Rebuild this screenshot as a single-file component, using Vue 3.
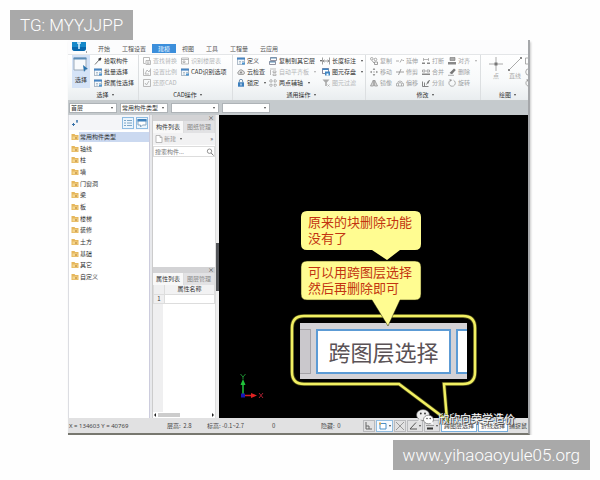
<script setup>
const tabs = ['开始', '工程设置', '建模', '视图', '工具', '工程量', '云应用']

const groups = [
  {
    name: '选择', key: 'select', cols: [
      [['pick', '拾取构件'], ['table', '批量选择'], ['table', '按属性选择']],
    ],
  },
  {
    name: 'CAD操作', key: 'cad', cols: [
      [['doc', '查找替换', 1], ['scale', '设置比例', 1], ['check', '还原CAD', 1]],
      [['form', '识别楼层表', 1], ['table', 'CAD识别选项']],
    ],
  },
  {
    name: '通用操作', key: 'common', cols: [
      [['table', '定义'], ['cloud', '云检查'], ['lock', '锁定', 0, 1]],
      [['copy', '复制到其它层', 0, 1], ['align', '自动平齐板', 1, 1], ['axis', '两点辅轴', 0, 1]],
      [['measure', '长度标注', 0, 1], ['save', '图元存盘', 0, 1], ['filter', '图元过滤', 1]],
    ],
  },
  {
    name: '修改', key: 'modify', cols: [
      [['dup', '复制', 2], ['move', '移动', 2], ['mirror', '镜像', 2]],
      [['extend', '延伸', 2], ['trim', '修剪', 2], ['offset', '偏移', 2]],
      [['break', '打断', 2], ['merge', '合并', 2], ['split', '分割', 2]],
      [['stack', '对齐', 2, 1], ['erase', '删除', 2], ['rotate', '旋转', 2]],
    ],
  },
]

const combos = [
  { label: '楼层', value: '首层' },
  { label: '构件分类', value: '常用构件类型' },
  { label: '构件类型', value: '' },
  { label: '构件名称', value: '' },
]

const tree = ['常用构件类型', '轴线', '柱', '墙', '门窗洞', '梁', '板', '楼梯', '装修', '土方', '基础', '其它', '自定义']
</script>

<template>
  <svg class="defs" aria-hidden="true">
    <symbol id="pick" viewBox="0 0 8 8"><path d="M1 7.5 L5 3" stroke="#777" fill="none" /><path d="M4 2 L6 4 L7.5 1.5 L6.5 .6z" fill="#333" /></symbol>
    <symbol id="table" viewBox="0 0 8 8"><rect x=".5" y="1" width="7" height="6.5" fill="#f4f8fb" stroke="#90a2b2" stroke-width=".7" /><path d="M0 .6h8v2H0z" fill="#4684c2" /><path d="M2 4.5h2M2 6h2M5 4.5h2" stroke="#859bac" stroke-width=".6" /><path d="M5 5.5h3v2H5z" fill="#4d95d0" /></symbol>
    <symbol id="doc" viewBox="0 0 8 8"><path d="M.5 .5h6v3M.5 .5v6h2M3 3.5h4.5v4H3zM4 5h2.5M4 6.3h2.5" stroke="#aaa" stroke-width=".8" fill="none" /></symbol>
    <symbol id="scale" viewBox="0 0 8 8"><path d="M.5 .5v7h7v-7M2 6l2-4 2 2 1-2M2 6h4" stroke="#aaa" stroke-width=".8" fill="none" /></symbol>
    <symbol id="check" viewBox="0 0 8 8"><path d="M.5 .5h7v7h-7zM2 4l1.5 2L6 2" stroke="#aaa" stroke-width=".8" fill="none" /></symbol>
    <symbol id="form" viewBox="0 0 8 8"><path d="M.5 1h7v6h-7zM.5 2.5h7M2 4h2v1.5H2z" stroke="#aaa" stroke-width=".8" fill="none" /></symbol>
    <symbol id="cloud" viewBox="0 0 8 8"><path d="M1.8 6.4a1.6 1.6 0 0 1 0-3 2.3 2.3 0 0 1 4.3-.3 1.7 1.7 0 0 1 .2 3.3z" fill="#ddd" stroke="#888" stroke-width=".8" /><circle cx="4" cy="4.5" r="1" fill="#888" /></symbol>
    <symbol id="lock" viewBox="0 0 8 8"><path d="M2.3 3.5V2a1.7 1.7 0 0 1 3.4 0v1.5" stroke="#7290ac" fill="none" /><path d="M1 3.3h6v4.4H1z" fill="#3c7fbd" /><path d="M3.5 4.5h1v2h-1z" fill="#fff" /></symbol>
    <symbol id="copy" viewBox="0 0 8 8"><path d="M1.500 .5h6v3h-6zM.5 4.500h6v3h-6z" stroke="#778" stroke-width=".8" fill="#fff" /><path d="M1.500 .5h6v1h-6zM.5 4.500h6v1h-6z" fill="#5a8fb8" /></symbol>
    <symbol id="align" viewBox="0 0 8 8"><path d="M1 1h6M1.500 2v5M4 3h3v1.500H4zM4 6h3v1.500H4z" stroke="#aaa" stroke-width=".8" fill="none" /></symbol>
    <symbol id="axis" viewBox="0 0 8 8"><path d="M2 0v8M6 0v8M0 2h8M0 6h8" stroke="#888" stroke-width=".8" stroke-dasharray="1.500 .8" /></symbol>
    <symbol id="measure" viewBox="0 0 8 8"><path d="M.5 .5v7M7.500 .5v7M1 4h6M2.500 2.800L1 4l1.500 1.200M5.500 2.800L7 4 5.500 5.200" stroke="#777" stroke-width=".7" fill="none" /></symbol>
    <symbol id="save" viewBox="0 0 8 8"><path d="M.5 .5h6v5h-6z" fill="#fff" stroke="#557" stroke-width=".7" /><path d="M.5 .5h6v1.500h-6zM3 3.500h5v4H3z" fill="#3f86c4" /><path d="M4.500 5.500h2v2h-2z" fill="#fff" /></symbol>
    <symbol id="filter" viewBox="0 0 8 8"><path d="M.5 .5h7L4.800 3.500V7H3.200V3.500z" fill="#aaa" /><path d="M5.500 5.500l2 2m0-2l-2 2" stroke="#aaa" stroke-width=".7" /></symbol>
    <symbol id="dup" viewBox="0 0 8 8"><circle cx="1.800" cy="1.800" r="1.300" stroke="#888" stroke-width=".7" fill="none" /><circle cx="5.500" cy="2.500" r="1.300" stroke="#888" stroke-width=".7" fill="none" /><path d="M2 3.500L4 6M4.500 5h3v2.500h-3z" stroke="#888" stroke-width=".8" fill="none" /></symbol>
    <symbol id="move" viewBox="0 0 8 8"><path d="M4 0l1.300 1.700H2.700zM4 8l1.300-1.700H2.700zM0 4l1.700-1.300v2.600zM8 4L6.300 2.700v2.600z" fill="#777" /><circle cx="4" cy="4" r=".7" fill="#999" /></symbol>
    <symbol id="mirror" viewBox="0 0 8 8"><path d="M3.400 1v6H.5zM4.600 1v6h2.900z" stroke="#888" stroke-width=".7" fill="#ddd" /></symbol>
    <symbol id="extend" viewBox="0 0 8 8"><path d="M0 4h3M4 5.500L6 2M6.500 3.500H8" stroke="#999" stroke-width=".8" fill="none" /></symbol>
    <symbol id="trim" viewBox="0 0 8 8"><path d="M0 4h8M2.500 7L5 1" stroke="#888" stroke-width=".8" fill="none" /></symbol>
    <symbol id="offset" viewBox="0 0 8 8"><path d="M.5 7h7V4.500H6.500a2.500 2.500 0 0 0-5 0H.5zM2.500 7V5a1.500 1.500 0 0 1 3 0v2" stroke="#999" stroke-width=".7" fill="none" /></symbol>
    <symbol id="break" viewBox="0 0 8 8"><path d="M0 5.500h3V7H0zM5 5.500h3V7H5z" fill="#888" /><path d="M1.500 1v3M6.500 1v3M1.500 2.500h5" stroke="#999" stroke-width=".7" /></symbol>
    <symbol id="merge" viewBox="0 0 8 8"><path d="M0 5.500h8V7H0z" fill="#888" /><path d="M.5 2h2.500v2H.5zM5 2h2.500v2H5z" stroke="#888" stroke-width=".7" fill="none" /></symbol>
    <symbol id="split" viewBox="0 0 8 8"><path d="M.5 2.500v5h6M2.500 7V3.500M7.500 1L4.500 5.500" stroke="#777" stroke-width=".9" fill="none" /><path d="M5 3l3-2-2 4z" fill="#777" /></symbol>
    <symbol id="stack" viewBox="0 0 8 8"><path d="M2 .5h5v3H2z" fill="#aaa" stroke="#777" stroke-width=".6" /><path d="M0 5h8v2.500H0z" fill="#888" /></symbol>
    <symbol id="erase" viewBox="0 0 8 8"><path d="M1.500 5L6 .5 7.800 2 4 6.300z" fill="#777" /><path d="M0 7.300h6" stroke="#999" stroke-width=".8" /></symbol>
    <symbol id="rotate" viewBox="0 0 8 8"><path d="M5.500 1.200a3.200 3.200 0 1 1-3.300.3" stroke="#999" stroke-width=".8" fill="none" /><path d="M1.500 0l2.800 1-2.300 1.800z" fill="#999" /></symbol>
    <symbol id="ring" viewBox="0 0 8 8"><circle cx="4" cy="4" r="3.300" stroke="#999" stroke-width=".8" fill="none" /></symbol>
    <symbol id="box" viewBox="0 0 8 8"><path d="M.5 1h7v6h-7z" stroke="#999" stroke-width=".8" fill="none" /></symbol>
    <symbol id="folder" viewBox="0 0 8 8"><path d="M.5 1h3l.8 1h3.200v5h-7z" fill="#e6b75d" /><path d="M1.500 3.500h5v2.800h-5z" fill="#f5d68c" /><path d="M4 4h2v2H4z" fill="#d3a65a" /></symbol>
  </svg>

  <p class="tag tag-top">TG: MYYJJPP</p>

  <main class="window">
    <header class="titlebar">
      <svg class="logo" viewBox="0 0 15 12"><path d="M0 0h14v6q0 3-3 3H3Q0 9 0 6z" fill="#1688c9" /><path d="M0 5h14v1q0 3-3 3H3Q0 9 0 6z" fill="#0867ac" /><path d="M5 1h4M7 1v6" stroke="#dff5ff" stroke-width="1.500" /><path d="M14 10h1" stroke="#555" /></svg>
      <nav class="tabs">
        <button v-for="t in tabs" :key="t" :class="{ on: t === '建模' }">{{ t }}</button>
      </nav>
    </header>

    <section class="ribbon">
      <div v-for="g in groups" :key="g.key" class="group" :class="g.key">
        <div class="tools">
          <button v-if="g.key === 'select'" class="big">
            <svg viewBox="0 0 16 17"><path d="M1 1h12v12H1z" fill="#f8fafc" stroke="#9ba9b7" /><path d="M.5 .5h13v2H.5z" fill="#5b8db9" /><path d="M10 8l5 4-2.500 .4L11 15z" fill="#2872ad" /></svg>
            选择
          </button>
          <div v-for="(c, i) in g.cols" :key="i" class="col">
            <button v-for="[icon, text, off, drop] in c" :key="text" class="tool" :class="{ off, drop }">
              <svg class="ico"><use :href="'#' + icon" /></svg><span>{{ text }}</span>
            </button>
          </div>
        </div>
        <button class="foot drop">{{ g.name }}</button>
      </div>
      <div class="group draw">
        <div class="tools">
          <button class="shape"><svg viewBox="0 0 16 16"><path d="M8 1v14M1 8h14" stroke="#aaa" /><path d="M6.500 6.500h3v3h-3z" fill="#777" /></svg>点</button>
          <button class="shape"><svg viewBox="0 0 16 16"><path d="M2 14L14 2" stroke="#aaa" /><path d="M1 13h2v2H1zM13 1h2v2h-2z" fill="#888" /></svg>直线</button>
          <div class="col">
            <button v-for="s in ['box', 'ring', 'rotate']" :key="s" class="tool" :aria-label="s"><svg class="ico"><use :href="'#' + s" /></svg></button>
          </div>
        </div>
        <button class="foot drop">绘图</button>
      </div>
    </section>

    <section class="filters">
      <label v-for="c in combos" :key="c.label" class="combo drop">
        <select :aria-label="c.label"><option>{{ c.value }}</option></select>
      </label>
    </section>

    <section class="work">
      <aside class="tree">
        <div class="tree-head">
          <svg class="pin" viewBox="0 0 8 8"><path d="M1 5.500h3M2.500 4v3M5 2h2M6 1v3" stroke="#3570a8" /></svg>
          <button aria-label="列表"><svg viewBox="0 0 10 10"><path d="M1 2.500h2M1 5h2M1 7.500h2M4 2.500h5M4 5h5M4 7.500h5" stroke="#7fa6c6" /></svg></button>
          <button aria-label="窗口"><svg viewBox="0 0 10 10"><path d="M1 1.500h8v5.500H5.500L3.500 9V7H1z" fill="#fff" stroke="#87a5be" /><path d="M.5 1h9v2.500h-9z" fill="#4183bd" /></svg></button>
        </div>
        <ul>
          <li v-for="(t, i) in tree" :key="t"><svg class="ico"><use href="#folder" /></svg><span :class="{ picked: i === 0 }">{{ t }}</span></li>
        </ul>
      </aside>

      <aside class="side">
        <div class="dock top">
          <div class="strip"><button aria-label="关闭">×</button></div>
          <div class="pair"><button class="on">构件列表</button><button>图纸管理</button></div>
          <div class="new">
            <svg class="ico" viewBox="0 0 8 8"><path d="M1 .5h4l2 2v5H1zM5 .5v2h2" fill="#fff" stroke="#aaa" stroke-width=".8" /></svg>
            <button class="drop">新建</button><span>»</span>
          </div>
          <div class="search">
            <input aria-label="搜索构件" placeholder="搜索构件...">
            <svg class="ico" viewBox="0 0 8 8"><circle cx="3.500" cy="3.200" r="2.200" fill="none" stroke="#777" stroke-width=".8" /><path d="M5.200 5l2.300 2.500" stroke="#777" /></svg>
          </div>
        </div>
        <div class="dock bottom">
          <div class="strip"><button aria-label="关闭">×</button></div>
          <div class="pair"><button class="on">属性列表</button><button>图层管理</button></div>
          <table>
            <thead><tr><th class="num"></th><th>属性名称</th></tr></thead>
            <tbody><tr><td class="num">1</td><td></td></tr></tbody>
          </table>
          <div class="rest"></div>
          <div class="scroll"><i class="l"></i><b></b><i class="r"></i></div>
        </div>
      </aside>

      <div class="splitter"><i></i></div>

      <div class="canvas">
        <svg class="axes" viewBox="0 0 32 30"><path d="M8 22V10" stroke="#20c43a" stroke-width="1.500" /><path d="M8 5l2.500 6h-5z" fill="#20c43a" /><path d="M5.500 0L8 3l2.500-3M8 3v2" stroke="#1c8a30" fill="none" /><path d="M9 21.500h8" stroke="#d12020" stroke-width="1.500" /><path d="M22 21.500l-6-2.500v5z" fill="#e02222" /><path d="M24 19l4 5M28 19l-4 5" stroke="#a52030" /><path d="M6 19.500h4v4H6z" fill="#1717b4" /></svg>
        <div class="closeup"><i class="edge-l"></i><span>跨图层选择</span><i class="edge-r"></i></div>
        <svg class="marks" viewBox="0 0 190 220">
          <path d="M14 107H173Q185 107 185 119V163Q185 175 173 175H154L157 211L109 175H14Q2 175 2 163V119Q2 107 14 107z" fill="none" stroke="#454416" stroke-width="4" />
          <path d="M14 107H173Q185 107 185 119V163Q185 175 173 175H154L157 211L109 175H14Q2 175 2 163V119Q2 107 14 107z" fill="none" stroke="#f1ef62" stroke-width="2.500" />
          <path d="M17 2H125Q131 2 131 8V35Q131 41 125 41H110L97 51L82 41H17Q11 41 11 35V8Q11 2 17 2z" fill="#fffc91" />
          <path d="M17 52H125Q131 52 131 58V85Q131 91 125 91H110L98 117L82 91H17Q11 91 11 85V58Q11 52 17 52z" fill="#fffc91" stroke="#222200" stroke-width=".5" />
        </svg>
        <p class="note n1">原来的块删除功能<br>没有了</p>
        <p class="note n2">可以用跨图层选择<br>然后再删除即可</p>
        <div class="sign">
          <svg viewBox="0 0 18 16"><ellipse cx="7" cy="6" rx="6.500" ry="5.500" fill="#eee" stroke="#555" stroke-width=".6" /><path d="M3 10l-1 3 4-2z" fill="#eee" /><circle cx="4.800" cy="4.500" r=".9" fill="#333" /><circle cx="9" cy="4.500" r=".9" fill="#333" /><ellipse cx="12.500" cy="10.500" rx="5" ry="4.300" fill="#fff" stroke="#555" stroke-width=".6" /><path d="M14 14l3 1.500-.5-3z" fill="#fff" /><circle cx="11" cy="9.500" r=".7" fill="#333" /><circle cx="14.200" cy="9.500" r=".7" fill="#333" /></svg>
          <span>欣欣向荣学造价</span>
        </div>
      </div>
    </section>

    <footer class="status">
      <span class="pos">X = 134603 Y = 40769</span>
      <span class="floor">层高:&nbsp; 2.8</span>
      <span class="level">标高: -0.1~2.7</span>
      <span class="zero">0</span>
      <span class="hidden">隐藏:&nbsp; 0</span>
      <div class="snaps">
        <button aria-label="正交" class="sq"><svg viewBox="0 0 8 8"><path d="M1 0v7h6M1 4h3v3" stroke="#666" fill="none" /></svg></button>
        <button aria-label="矩形" class="wide drop"><svg viewBox="0 0 8 8"><path d="M1 1.500h6v5.500H1z" stroke="#4b90c8" fill="#fff" /><path d="M0 .5h2v2H0z" fill="#d8a44b" /></svg></button>
        <button aria-label="交点" class="sq"><svg viewBox="0 0 8 8"><path d="M0 0l8 8M8 0L0 8" stroke="#999" /></svg></button>
        <button aria-label="角度" class="mid drop"><svg viewBox="0 0 8 8"><path d="M7 .5L1 7h7" stroke="#555" fill="none" /></svg></button>
        <button aria-label="线宽" class="mid drop"><svg viewBox="0 0 8 8"><path d="M0 3.500h8" stroke="#999" /><path d="M1 6.500h6" stroke="#333" stroke-width="2" /></svg></button>
        <button class="mode">跨图层选择</button>
        <button class="mode">折线选择</button>
        <button class="last">捕捉鼠</button>
      </div>
    </footer>
  </main>

  <p class="tag tag-bottom">www.yihaoaoyule05.org</p>
</template>

<style>
body { background: #fefefe; }
</style>

<style scoped>
* { box-sizing: border-box; margin: 0; padding: 0; }
button, select, input { font: inherit; color: inherit; background: none; border: 0; appearance: none; border-radius: 0; white-space: nowrap; outline: 0; }
i { font-style: normal; }
.defs { position: absolute; width: 0; height: 0; }
.tag { position: absolute; z-index: 5; height: 30px; padding: 0 10px; background: #a9a9a9; color: #fff; font: 300 17px/30px Roboto, "Noto Sans CJK SC", sans-serif; white-space: nowrap; }
.tag-top { left: 10px; top: 10px; }
.tag-bottom { right: 10px; top: 440px; }

.window { margin: 40px 70px 0 68px; background: #fff; border-right: 2px solid #a5a7aa; border-bottom: 2px solid #77776f; box-shadow: 1px 2px 2px #ccc; color: #333; font: 6px/8px "Noto Sans CJK SC", sans-serif; }
.drop { position: relative; }
.drop::after { content: ""; display: inline-block; margin-left: 4px; vertical-align: middle; border: 1px solid transparent; border-top: 2px solid #444; border-bottom: 0; flex: none; }

.titlebar { display: flex; height: 14px; background: #fcfcfd; }
.logo { width: 15px; height: 12px; margin: 2px 5px 0 4px; flex: none; }
.tabs { display: flex; align-items: flex-end; padding-bottom: 1px; }
.tabs button { height: 9px; line-height: 9px; padding: 0 6px; color: #555; }
.tabs .on { background: #3b8edb; color: #e8f4ff; }

.ribbon { display: flex; height: 47px; background: linear-gradient(#fff, #f7f9fa 60%, #e9edef); border-top: 1px solid #e4e6e8; border-bottom: 1px solid #c6cbcd; overflow: hidden; }
.group { flex: none; border-right: 1px solid #dcdfe1; }
.tools { display: flex; height: 35px; }
.group.select { width: 71px; padding-left: 4px; }
.group.cad { width: 94px; padding-left: 4px; }
.group.common { width: 133px; padding-left: 4px; }
.group.modify { width: 115px; padding-left: 4px; }
.group.draw { flex: 1 1 0; min-width: 0; border-right: 0; padding-left: 6px; overflow: hidden; }
.big { width: 18px; height: 33px; margin-right: 4px; background: #d5e3f7; display: flex; flex-direction: column; align-items: center; padding-top: 2px; gap: 2px; }
.big svg { width: 16px; height: 17px; }
.col { display: grid; grid-template-rows: repeat(3, 11px); align-content: start; }
.cad .col:first-child { width: 38px; }
.common .col:nth-child(1) { width: 32px; }
.common .col:nth-child(2) { width: 53px; }
.modify .col { width: 26px; }
.tool { display: flex; align-items: center; gap: 2px; }
.drop.tool::after, .foot::after { margin-left: 3px; }
.ico { width: 8px; height: 8px; flex: none; display: block; }
.tool.off { color: #b4b6b8; }
.tool.off::after { border-top-color: #aaa; }
.modify .tool { color: #a0a2a4; }
.foot { display: block; margin: 0 auto; height: 10px; line-height: 8px; }
.shape { width: 18px; flex: none; margin-right: 1px; display: flex; flex-direction: column; align-items: center; color: #aaa; padding-top: 1px; }
.shape svg { width: 16px; height: 16px; }

.filters { display: flex; gap: 3px; height: 14px; padding: 2px 1px; background: #c5cacd; }
.combo { width: 48px; height: 10px; background: #fff; border: 1px solid #aeb3b7; display: flex; align-items: center; padding-right: 3px; }
.combo select { flex: 1; min-width: 0; padding-left: 1px; line-height: 8px; height: 8px; }
.combo::after { margin-left: 0; }

.work { display: flex; min-height: 303px; background: #e8e9ec; }
.tree { width: 82px; background: #fff; border-right: 1px solid #ccd; flex: none; border-left: 1px solid #dcdde2; }
.tree-head { display: flex; align-items: center; gap: 2px; height: 15px; padding: 0 1px 0 2px; background: #f4f5f8; }
.tree-head .pin { width: 8px; height: 8px; margin-right: auto; }
.tree-head button { width: 12px; height: 12px; background: #ebf5fd; border: 1px solid #8ebce2; display: flex; }
.tree-head button svg { width: 100%; }
.tree ul { list-style: none; display: grid; grid-auto-rows: 1fr; height: 152px; margin-top: 1px; padding-left: 2px; }
.tree li { display: flex; align-items: center; }
.tree li span { flex: 1; padding-left: 1px; line-height: 10px; }
.tree .picked { background: #cbd9f0; }

.side { width: 64px; margin-left: 2px; display: flex; flex-direction: column; flex: none; }
.dock { display: flex; flex-direction: column; background: #fff; border-left: 1px solid #ccc; border-right: 1px solid #ddd; }
.dock.top { height: 152px; }
.dock.bottom { flex: 1; }
.strip { height: 6px; background: #d3d3d5; display: flex; justify-content: flex-end; padding-right: 1px; }
.strip button { line-height: 6px; }
.pair { display: flex; height: 12px; background: #e2e2e4; }
.pair button { flex: 1; color: #888; border-right: 1px solid #ddd; }
.pair .on { background: #f8f8f8; color: #333; }
.new { height: 12px; display: flex; align-items: center; gap: 1px; padding: 0 2px; background: #f2f2f3; color: #999; }
.new span { margin-left: auto; color: #444; }
.search { display: flex; align-items: center; height: 11px; margin-top: 1px; border: 1px solid #ddd; }
.search input { flex: 1; min-width: 0; height: 9px; padding-left: 1px; }
.search input::placeholder { color: #777; opacity: 1; }
table { border-collapse: collapse; width: 100%; background: #fff; }
th, td { height: 9px; border: 1px solid #ddd; border-top: 0; font-weight: 400; }
th { background: #f2f2f3; }
.num { width: 11px; text-align: center; background: #efeff0; }
.rest { flex: 1; background: linear-gradient(90deg, #efeff0 10px, #fff 10px); }
.scroll { height: 6px; display: flex; align-items: center; padding: 0 1px; }
.scroll b { width: 22px; height: 4px; background: #ccc; margin: 0 auto 0 2px; }
.scroll i { border: 2px solid transparent; width: 0; }
.scroll .l { border-right-color: #222; border-left: 0; }
.scroll .r { border-left-color: #222; border-right: 0; }
.splitter { width: 3px; display: flex; align-items: center; background: #eee; flex: none; }
.splitter i { width: 3px; height: 48px; background: #54565a; }

.canvas { position: relative; flex: 1; background: #000; min-width: 0; }
.axes { position: absolute; left: 16px; top: 259px; width: 32px; height: 30px; }
.marks { position: absolute; z-index: 1; left: 71px; top: 94px; width: 190px; height: 220px; }
.closeup { position: absolute; left: 81px; top: 208px; width: 167px; height: 56px; background: #d4d2d6; display: flex; gap: 5px; padding: 6px 0 5px; overflow: hidden; }
.closeup span { flex: 1; background: #fff; border: 2px solid #5c9bd5; color: #5a5256; font-size: 22px; line-height: 40px; text-align: center; }
.closeup i { width: 11px; flex: none; }
.edge-l { background: #cac8cc; border: 1px solid #a5a3a8; border-left: 0; }
.edge-r { background: #fff; border: 2px solid #5c9bd5; border-right: 0; }
.note { position: absolute; z-index: 2; left: 89px; color: #c33410; font-size: 13px; line-height: 16px; white-space: nowrap; }
.n1 { top: 99px; }
.n2 { top: 149px; }
.sign { position: absolute; z-index: 2; left: 197px; top: 294px; display: flex; align-items: flex-start; gap: 4px; color: #fff; font-size: 11px; line-height: 18px; white-space: nowrap; text-shadow: 0 0 1px #333, 1px 1px 0 #444; }
.sign svg { width: 18px; height: 16px; }

.status { display: flex; align-items: center; height: 15px; padding-left: 1px; background: #e1e1e2; color: #444; white-space: nowrap; overflow: hidden; }
.pos { width: 98px; font-family: "Noto Sans", sans-serif; }
.floor { width: 40px; }
.level { width: 65px; }
.zero { width: 49px; }
.hidden { width: 42px; }
.snaps { display: flex; flex: 1; align-items: center; gap: 1px; min-width: 0; }
.snaps button { height: 12px; flex: none; border: 1px solid #b9babd; display: flex; align-items: center; justify-content: center; }
.snaps svg { width: 8px; height: 8px; }
.snaps .drop::after { margin-left: 2px; }
.snaps .sq { width: 12px; }
.snaps .wide { width: 17px; background: #f5faff; border-color: #92bde0; }
.snaps .mid { width: 16px; }
.snaps .mode { padding: 0 2px; background: #fff; border-color: #78afdd; }
.snaps .last { border: 0; }
</style>
